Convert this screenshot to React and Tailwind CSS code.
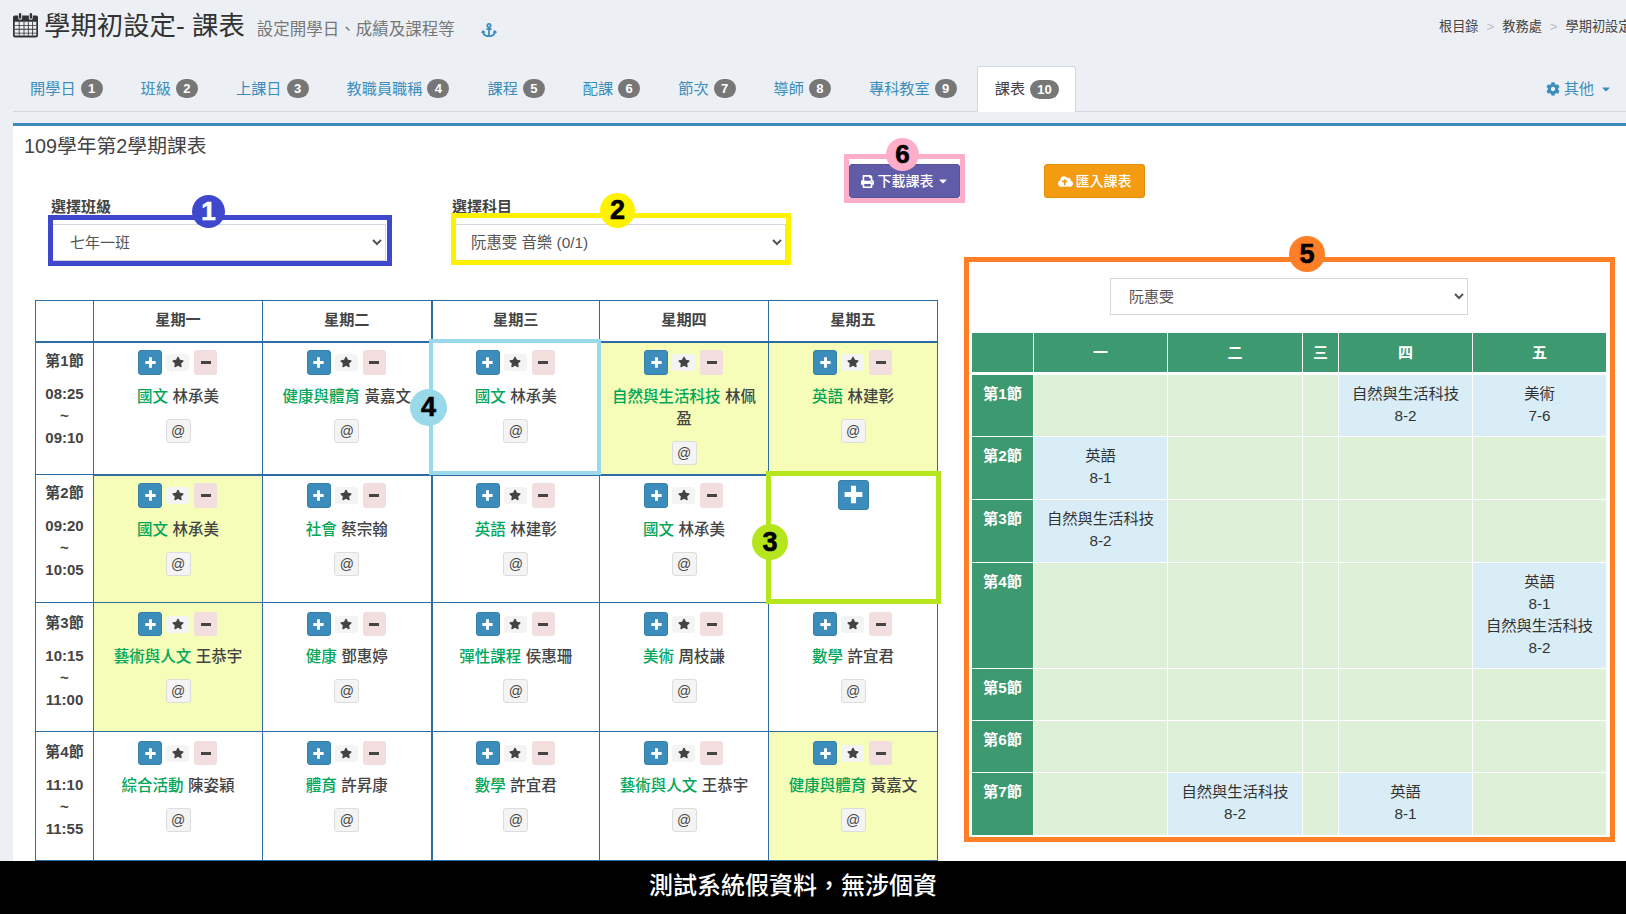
import { FaAnchor, FaCaretDown, FaCloudUploadAlt, FaCog, FaPrint, FaStar } from "react-icons/fa";

const tabs = [
  { label: "開學日", n: 1, cls: "ml-0" },
  { label: "班級", n: 2, cls: "ml-[4px]" },
  { label: "上課日", n: 3, cls: "ml-[4px]" },
  { label: "教職員職稱", n: 4, cls: "ml-[4px]" },
  { label: "課程", n: 5, cls: "ml-[4px]" },
  { label: "配課", n: 6, cls: "ml-[4px]" },
  { label: "節次", n: 7, cls: "ml-[4px]" },
  { label: "導師", n: 8, cls: "ml-[4px]" },
  { label: "專科教室", n: 9, cls: "ml-[4px]" },
];

const days = ["星期一", "星期二", "星期三", "星期四", "星期五"];

const rows = [
  {
    name: "第1節",
    from: "08:25",
    to: "09:10",
    h: "h-[133px]",
    cells: [
      { s: "國文", t: "林承美" },
      { s: "健康與體育", t: "黃嘉文" },
      { s: "國文", t: "林承美" },
      { s: "自然與生活科技", t: "林佩盈", on: true },
      { s: "英語", t: "林建彰", on: true },
    ],
  },
  {
    name: "第2節",
    from: "09:20",
    to: "10:05",
    h: "h-[128px]",
    cells: [
      { s: "國文", t: "林承美", on: true },
      { s: "社會", t: "蔡宗翰" },
      { s: "英語", t: "林建彰" },
      { s: "國文", t: "林承美" },
      null,
    ],
  },
  {
    name: "第3節",
    from: "10:15",
    to: "11:00",
    h: "h-[129px]",
    cells: [
      { s: "藝術與人文", t: "王恭宇", on: true },
      { s: "健康", t: "鄧惠婷" },
      { s: "彈性課程", t: "侯惠珊" },
      { s: "美術", t: "周枝謙" },
      { s: "數學", t: "許宜君" },
    ],
  },
  {
    name: "第4節",
    from: "11:10",
    to: "11:55",
    h: "h-[129px]",
    cells: [
      { s: "綜合活動", t: "陳姿穎" },
      { s: "體育", t: "許昇康" },
      { s: "數學", t: "許宜君" },
      { s: "藝術與人文", t: "王恭宇" },
      { s: "健康與體育", t: "黃嘉文", on: true },
    ],
  },
];

const teacherRows = [
  { name: "第1節", h: "h-[61px]", cells: [null, null, null, ["自然與生活科技", "8-2"], ["美術", "7-6"]] },
  { name: "第2節", h: "h-[62px]", cells: [["英語", "8-1"], null, null, null, null] },
  { name: "第3節", h: "h-[62px]", cells: [["自然與生活科技", "8-2"], null, null, null, null] },
  { name: "第4節", h: "h-[105px]", cells: [null, null, null, null, ["英語", "8-1", "自然與生活科技", "8-2"]] },
  { name: "第5節", h: "h-[51px]", cells: [null, null, null, null, null] },
  { name: "第6節", h: "h-[51px]", cells: [null, null, null, null, null] },
  { name: "第7節", h: "h-[62px]", cells: [null, ["自然與生活科技", "8-2"], null, ["英語", "8-1"], null] },
];

const PlusGlyph = ({ className }) => (
  <svg viewBox="0 0 12 12" className={className} fill="currentColor">
    <path d="M4.4 0.4h3.2v4h4v3.2h-4v4H4.4v-4h-4V4.4h4z" />
  </svg>
);

const CalendarIcon = () => (
  <svg viewBox="0 0 26 26" className="w-[25px] h-[26px] text-[#333]" fill="currentColor">
    <path
      fillRule="evenodd"
      d="M2 3h3.5v2.6a2 2 0 0 0 4 0V3h7v2.6a2 2 0 0 0 4 0V3H24a2 2 0 0 1 2 2v19a2 2 0 0 1-2 2H2a2 2 0 0 1-2-2V5a2 2 0 0 1 2-2zM1.8 9.5V24h22.4V9.5z"
    />
    <rect x="6.2" y="0.6" width="2.4" height="6" rx="1.2" />
    <rect x="17.4" y="0.6" width="2.4" height="6" rx="1.2" />
    <path d="M6 9.5h.9V24H6zM11 9.5h.9V24H11zM15.5 9.5h.9V24h-.9zM20 9.5h.9V24H20zM1.8 13h22.4v.9H1.8zM1.8 17h22.4v.9H1.8zM1.8 21h22.4v.9H1.8z" />
  </svg>
);

const Badge = ({ n }) => (
  <span
    className={`ml-[5px] h-[19px] rounded-[10px] bg-[#777] text-white text-[13px] leading-[19px] font-bold text-center ${
      n > 9 ? "w-[29px]" : "w-[22px]"
    }`}
  >
    {n}
  </span>
);

const CourseCell = ({ cell, low }) => (
  <div className="flex flex-col items-center">
    <div className={`flex items-center pr-[1px] ${low ? "h-[24px]" : "h-[25px]"}`}>
      <button
        className={`w-[24px] rounded-[3px] bg-[#3c8dbc] border border-[#367fa9] text-white flex items-center justify-center ${
          low ? "h-[24px]" : "h-[25px]"
        }`}
      >
        <PlusGlyph className="w-[11px] h-[11px]" />
      </button>
      <button className="ml-[4px] w-[23px] h-[17px] rounded-[3px] bg-[#f4f4f4] text-[#444] flex items-center justify-center">
        <FaStar className="w-[12px] h-[12px]" />
      </button>
      <button
        className={`ml-[5px] w-[23px] rounded-[3px] bg-[#f2dede] text-[#444] flex items-center justify-center ${
          low ? "h-[24px]" : "h-[25px]"
        }`}
      >
        <span className="w-[10px] h-[3px] bg-[#444]" />
      </button>
    </div>
    <div
      className={`w-full text-center text-[15.5px] leading-[22px] font-medium px-[8px] ${
        low ? "mt-[10px]" : "mt-[11px]"
      }`}
    >
      <span className="text-[#00a65a]">{cell.s}</span> <span className="text-[#444]">{cell.t}</span>
    </div>
    <button className="mt-[11px] w-[25px] h-[24px] rounded-[3px] bg-[#f4f4f4] border border-[#ddd] text-[#444] text-[14px] leading-[20px]">
      @
    </button>
  </div>
);

const CourseTable = () => (
  <table className="table-fixed border-collapse w-[903px] mt-[22px] text-[#333]">
    <colgroup>
      <col className="w-[58px]" />
      <col className="w-[169px]" />
      <col className="w-[169px]" />
      <col className="w-[168px]" />
      <col className="w-[169px]" />
      <col className="w-[169px]" />
    </colgroup>
    <thead>
      <tr className="h-[41px]">
        <th className="border border-[#2e6da4] border-b-2" />
        {days.map((d, i) => (
          <th
            key={d}
            className={`border border-[#2e6da4] border-b-2 text-[15.2px] font-bold align-middle text-[#444] ${
              i === 2 ? "border-l-2" : ""
            }`}
          >
            {d}
          </th>
        ))}
      </tr>
    </thead>
    <tbody>
      {rows.map((row, r) => (
        <tr key={row.name} className={row.h}>
          <td
            className={`border border-[#2e6da4] align-top text-center text-[15px] leading-[22px] font-bold text-[#444] ${
              r > 1 ? "pt-[9px]" : "pt-[7px]"
            }`}
          >
            <div className="mb-[11px]">{row.name}</div>
            <div>{row.from}</div>
            <div>~</div>
            <div>{row.to}</div>
          </td>
          {row.cells.map((cell, i) => (
            <td
              key={i}
              className={`border border-[#2e6da4] align-top ${r > 1 ? "pt-[9px]" : "pt-[7px]"} ${
                i === 2 ? "border-l-2" : ""
              } ${r === 0 ? "border-b-2" : ""} ${cell && cell.on ? "bg-[#f5fdb8]" : ""}`}
            >
              {cell ? (
                <CourseCell cell={cell} low={r > 1} />
              ) : (
                <div className="flex justify-center -mt-[3px]">
                  <button className="w-[31px] h-[30px] rounded-[3px] bg-[#3c8dbc] border border-[#367fa9] text-white flex items-center justify-center">
                    <PlusGlyph className="w-[19px] h-[19px]" />
                  </button>
                </div>
              )}
            </td>
          ))}
        </tr>
      ))}
    </tbody>
  </table>
);

const TeacherTable = () => (
  <table className="table-fixed border-separate border-spacing-[1px] w-[635px] mt-[17px] ml-[6px] text-[15.3px] leading-[22px] text-[#333]">
    <colgroup>
      <col className="w-[61px]" />
      <col className="w-[133px]" />
      <col className="w-[134px]" />
      <col className="w-[35px]" />
      <col className="w-[133px]" />
      <col className="w-[133px]" />
    </colgroup>
    <thead>
      <tr className="h-[39px]">
        <th className="bg-[#3d9970]" />
        {["一", "二", "三", "四", "五"].map((d) => (
          <th key={d} className="bg-[#3d9970] text-white font-bold align-middle text-[15px]">
            {d}
          </th>
        ))}
      </tr>
    </thead>
    <tbody>
      <tr className="h-[1px]">
        <td colSpan={6} className="p-0" />
      </tr>
      {teacherRows.map((row) => (
        <tr key={row.name} className={row.h}>
          <td className="bg-[#3d9970] text-white font-bold text-center align-top pt-[8px]">{row.name}</td>
          {row.cells.map((lines, i) => (
            <td
              key={i}
              className={`align-top text-center pt-[8px] ${lines ? "bg-[#d9edf7]" : "bg-[#dff0d8]"}`}
            >
              {lines && lines.map((l, k) => <div key={k}>{l}</div>)}
            </td>
          ))}
        </tr>
      ))}
    </tbody>
  </table>
);

const Annotations = () => (
  <>
    {/* hand drawn frames over the page */}
    <div className="absolute left-[48px] top-[215px] w-[344px] h-[51px] border-[5px] border-[#3f48cc]" />
    <div className="absolute left-[451px] top-[213px] w-[340px] h-[52px] border-[5px] border-[#fff200]" />
    <div className="absolute left-[766px] top-[471px] w-[175px] h-[133px] border-[5px] border-[#b5e61d]" />
    <div className="absolute left-[429px] top-[339px] w-[172px] h-[136px] border-[4px] border-[#99d9ea]" />
    <div className="absolute left-[964px] top-[257px] w-[651px] h-[585px] border-[5px] border-[#ff7f27]" />
    <div className="absolute left-[844px] top-[154px] w-[121px] h-[49px] border-[5px] border-[#ffaec9]" />

    <div className="absolute left-[192px] top-[195px] w-[33px] h-[33px] rounded-full bg-[#3f48cc] text-white text-[26px] leading-[33px] font-bold text-center [-webkit-text-stroke:0.6px_currentColor]">1</div>
    <div className="absolute left-[600px] top-[193px] w-[35px] h-[35px] rounded-full bg-[#fff200] text-black text-[27px] leading-[35px] font-bold text-center [-webkit-text-stroke:0.6px_currentColor]">2</div>
    <div className="absolute left-[752px] top-[524px] w-[36px] h-[36px] rounded-full bg-[#b5e61d] text-black text-[27px] leading-[36px] font-bold text-center [-webkit-text-stroke:0.6px_currentColor]">3</div>
    <div className="absolute left-[410px] top-[389px] w-[37px] h-[37px] rounded-full bg-[#99d9ea] text-black text-[27px] leading-[37px] font-bold text-center [-webkit-text-stroke:0.6px_currentColor]">4</div>
    <div className="absolute left-[1289px] top-[236px] w-[36px] h-[36px] rounded-full bg-[#ff7f27] text-black text-[27px] leading-[36px] font-bold text-center [-webkit-text-stroke:0.6px_currentColor]">5</div>
    <div className="absolute left-[886px] top-[138px] w-[33px] h-[33px] rounded-full bg-[#ffaec9] text-black text-[26px] leading-[33px] font-bold text-center [-webkit-text-stroke:0.6px_currentColor]">6</div>
  </>
);

export default function App() {
  return (
    <div
      lang="zh-TW"
      className="relative w-[1626px] h-[914px] overflow-hidden flex flex-col bg-[#ecf0f5] text-[#333] font-['Liberation_Sans','Noto_Sans_CJK_TC',sans-serif]"
    >
      {/* Header */}
      <div className="h-[66px] shrink-0 flex items-start pl-[13px] pt-[12px]">
        <CalendarIcon />
        <h1 className="ml-[6px] text-[26.4px] leading-[28px] text-[#333] whitespace-nowrap">學期初設定- 課表</h1>
        <span className="ml-[12px] mt-[5px] text-[16.5px] leading-[24px] text-[#777] whitespace-nowrap">設定開學日、成績及課程等</span>
        <FaAnchor className="ml-[26px] mt-[10px] w-[16px] h-[16px] text-[#3c8dbc]" />
        <div className="ml-auto mt-[6px] flex items-center text-[13.2px] leading-[18px] text-[#444] whitespace-nowrap w-[187px]">
          <span>根目錄</span>
          <span className="mx-[8px] text-[#bbb]">&gt;</span>
          <span>教務處</span>
          <span className="mx-[8px] text-[#bbb]">&gt;</span>
          <span>學期初設定</span>
        </div>
      </div>

      {/* Tabs */}
      <div className="h-[46px] shrink-0 ml-[13px] border-b border-[#d2d6de] flex items-start text-[15.2px] leading-[22px]">
        {tabs.map((t) => (
          <div key={t.n} className={`flex items-center h-[45px] px-[17px] text-[#3c8dbc] whitespace-nowrap ${t.cls}`}>
            {t.label}
            <Badge n={t.n} />
          </div>
        ))}
        <div className="ml-[3px] flex items-center h-[46px] pl-[17px] pr-[16px] pb-[1px] bg-white border border-b-0 border-[#d2d6de] rounded-t-[3px] text-[#444]">
          課表
          <Badge n={10} />
        </div>
        <div className="ml-auto mr-[14px] flex items-center h-[45px] text-[#3c8dbc]">
          <FaCog className="w-[14px] h-[14px] mr-[4px]" />
          其他
          <FaCaretDown className="ml-[6px] w-[12px] h-[12px]" />
        </div>
      </div>

      {/* Box */}
      <div className="mt-[11px] ml-[13px] flex-1 min-h-0 bg-white border-t-[3px] border-[#3c8dbc] overflow-hidden">
        <h3 className="pl-[11px] pt-[5px] h-[38px] text-[19.8px] leading-[30px] text-[#444]">109學年第2學期課表</h3>

        <div className="flex items-start h-[114px] pl-[39px]">
          <div className="w-[334px] mt-[32px]">
            <label className="block -ml-[1px] h-[28px] text-[15px] leading-[22px] font-bold text-[#444]">選擇班級</label>
            <select className="w-full h-[37px] pl-[13px] bg-white border border-[#d2d6de] text-[15px] text-[#555]">
              <option>七年一班</option>
            </select>
          </div>
          <div className="w-[331px] ml-[69px] mt-[32px]">
            <label className="block -ml-[3px] h-[28px] text-[15px] leading-[22px] font-bold text-[#444]">選擇科目</label>
            <select className="w-full h-[37px] pl-[11px] bg-white border border-[#d2d6de] text-[15.4px] text-[#555]">
              <option>阮惠雯 音樂 (0/1)</option>
            </select>
          </div>
          <button className="ml-[63px] w-[111px] h-[34px] flex items-center justify-center rounded-[3px] bg-[#605ca8] border border-[#555299] text-white text-[14px] font-medium whitespace-nowrap">
            <FaPrint className="w-[13px] h-[13px] mr-[4px]" />
            下載課表
            <FaCaretDown className="ml-[3px] w-[12px] h-[12px]" />
          </button>
          <button className="ml-[84px] w-[101px] h-[34px] flex items-center justify-center rounded-[3px] bg-[#f39c12] border border-[#e08e0b] text-white text-[14px] font-medium whitespace-nowrap">
            <FaCloudUploadAlt className="w-[15px] h-[15px] mr-[3px]" />
            匯入課表
          </button>
        </div>

        <div className="flex items-start pl-[22px]">
          <CourseTable />
          <div className="ml-[27px] flex flex-col">
            <select className="ml-[145px] w-[358px] h-[37px] pl-[14px] bg-white border border-[#d2d6de] text-[15px] text-[#555]">
              <option>阮惠雯</option>
            </select>
            <TeacherTable />
          </div>
        </div>
      </div>

      {/* Notice bar */}
      <div className="absolute left-0 bottom-0 w-full h-[53px] pr-[40px] bg-black text-white text-[24px] leading-[50px] text-center font-medium">
        測試系統假資料，無涉個資
      </div>

      <Annotations />
    </div>
  );
}
